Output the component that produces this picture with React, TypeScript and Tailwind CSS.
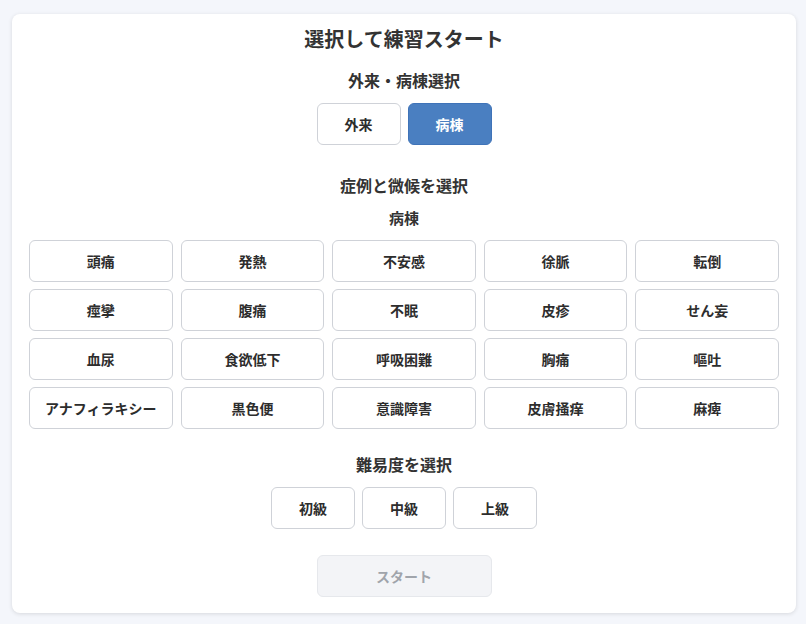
const symptoms = [
  "頭痛", "発熱", "不安感", "徐脈", "転倒",
  "痙攣", "腹痛", "不眠", "皮疹", "せん妄",
  "血尿", "食欲低下", "呼吸困難", "胸痛", "嘔吐",
  "アナフィラキシー", "黒色便", "意識障害", "皮膚掻痒", "麻痺",
];

const btn =
  "h-[42px] rounded-md border border-[#cfd2d8] bg-white text-[14px] font-bold text-[#2d2d2d]";

export default function App() {
  return (
    <div
      className="min-h-[624px] bg-[#f4f6fb] px-3 pt-[14px]"
      style={{ fontFamily: '"Noto Sans CJK JP", "Noto Sans", sans-serif' }}
    >
      <div className="w-[784px] rounded-lg bg-white px-[17px] pb-4 pt-[10px] shadow-[0_1px_4px_rgba(0,0,0,0.12)]">
        <h1 className="text-center text-[20px] font-bold leading-[30px] text-[#333]">
          選択して練習スタート
        </h1>
        <h2 className="mt-[14px] text-center text-[16px] font-bold leading-6 text-[#333]">
          外来・病棟選択
        </h2>
        <div className="mt-[11px] flex justify-center gap-[7px]">
          <button className={`${btn} w-[84px]`}>外来</button>
          <button className="h-[42px] w-[84px] rounded-md border border-[#3f73b8] bg-[#4a7fc1] text-[14px] font-bold text-white">
            病棟
          </button>
        </div>
        <h2 className="mt-[28px] text-center text-[16px] font-bold leading-6 text-[#333]">
          症例と微候を選択
        </h2>
        <h3 className="mt-[9px] text-center text-[15px] font-bold leading-6 text-[#333]">
          病棟
        </h3>
        <div className="mt-[10px] grid grid-cols-5 gap-x-[8px] gap-y-[7px]">
          {symptoms.map((s) => (
            <button key={s} className={btn}>
              {s}
            </button>
          ))}
        </div>
        <h2 className="mt-[23px] text-center text-[16px] font-bold leading-6 text-[#333]">
          難易度を選択
        </h2>
        <div className="mt-[11px] flex justify-center gap-[7px]">
          {["初級", "中級", "上級"].map((s) => (
            <button key={s} className={`${btn} w-[84px]`}>
              {s}
            </button>
          ))}
        </div>
        <div className="mt-[26px] flex justify-center">
          <button className="h-[42px] w-[175px] rounded-md border border-[#e6e8ec] bg-[#f3f4f7] text-[14px] font-bold text-[#a0a4ab]">
            スタート
          </button>
        </div>
      </div>
    </div>
  );
}
